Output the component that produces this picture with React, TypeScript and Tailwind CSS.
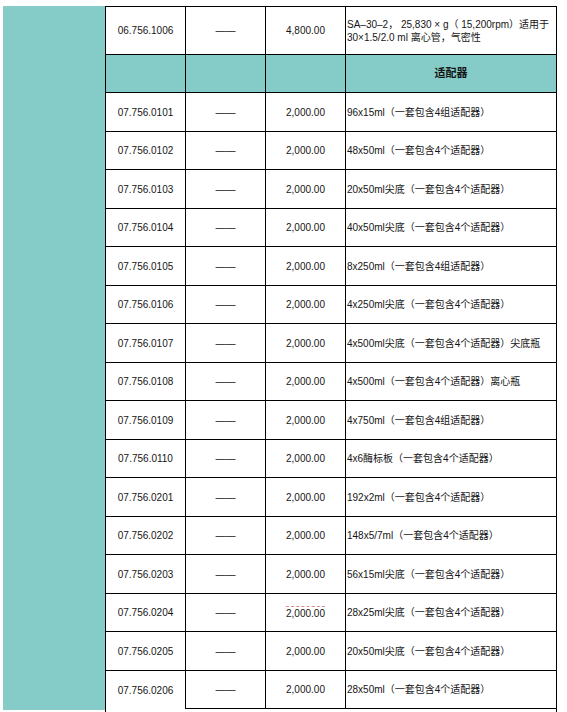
import React from 'react';

type Row = {
  code: string;
  price: string;
  desc: string;
  marked?: boolean;
};

const rows: Row[] = [
  { code: '07.756.0101', price: '2,000.00', desc: '96x15ml（一套包含4组适配器）' },
  { code: '07.756.0102', price: '2,000.00', desc: '48x50ml（一套包含4个适配器）' },
  { code: '07.756.0103', price: '2,000.00', desc: '20x50ml尖底（一套包含4个适配器）' },
  { code: '07.756.0104', price: '2,000.00', desc: '40x50ml尖底（一套包含4个适配器）' },
  { code: '07.756.0105', price: '2,000.00', desc: '8x250ml（一套包含4组适配器）' },
  { code: '07.756.0106', price: '2,000.00', desc: '4x250ml尖底（一套包含4个适配器）' },
  { code: '07.756.0107', price: '2,000.00', desc: '4x500ml尖底（一套包含4个适配器）尖底瓶' },
  { code: '07.756.0108', price: '2,000.00', desc: '4x500ml（一套包含4个适配器）离心瓶' },
  { code: '07.756.0109', price: '2,000.00', desc: '4x750ml（一套包含4组适配器）' },
  { code: '07.756.0110', price: '2,000.00', desc: '4x6酶标板（一套包含4个适配器）' },
  { code: '07.756.0201', price: '2,000.00', desc: '192x2ml（一套包含4个适配器）' },
  { code: '07.756.0202', price: '2,000.00', desc: '148x5/7ml（一套包含4个适配器）' },
  { code: '07.756.0203', price: '2,000.00', desc: '56x15ml尖底（一套包含4个适配器）' },
  { code: '07.756.0204', price: '2,000.00', desc: '28x25ml尖底（一套包含4个适配器）', marked: true },
  { code: '07.756.0205', price: '2,000.00', desc: '20x50ml尖底（一套包含4个适配器）' },
  { code: '07.756.0206', price: '2,000.00', desc: '28x50ml（一套包含4个适配器）' },
];

const font = { fontFamily: '"Liberation Sans", "Noto Sans CJK SC", sans-serif' };

const App = () => {
  return (
    <div className="w-[567px] h-[712px] bg-white flex pl-[3px] pt-[6px] text-[10px] text-[#151515]" style={font}>
      {/* teal side band */}
      <div className="w-[102px] h-[704px] bg-[#85cbc7]" />

      <div className="w-[452px] border-l border-t border-r border-black">
        {/* first row */}
        <div className="grid grid-cols-[80px_80px_80px_1fr] h-[48px] border-b border-black">
          <div className="flex items-center justify-center border-r border-black">06.756.1006</div>
          <div className="flex items-center justify-center border-r border-black">——</div>
          <div className="flex items-center justify-center border-r border-black">4,800.00</div>
          <div className="flex flex-col justify-center pl-[1px] leading-[13px]">
            <span>SA–30–2， 25,830 × g（ 15,200rpm）适用于</span>
            <span>30×1.5/2.0 ml 离心管，气密性</span>
          </div>
        </div>

        {/* section header */}
        <div className="grid grid-cols-[80px_80px_80px_1fr] h-[38px] bg-[#85cbc7] border-b border-black">
          <div className="border-r border-black" />
          <div className="border-r border-black" />
          <div className="border-r border-black" />
          <div className="flex items-center justify-center font-bold text-[11px]">适配器</div>
        </div>

        {rows.map((r, i) => {
          const last = i === rows.length - 1;
          return (
            <div
              key={r.code}
              className={`grid grid-cols-[80px_80px_80px_1fr] ${i % 2 === 0 ? 'h-[39px]' : 'h-[38px]'}`}
            >
              <div className={`flex items-center justify-center border-r border-black ${last ? '' : 'border-b'}`}>
                {r.code}
              </div>
              <div className={`flex items-center justify-center border-r border-black ${last ? 'border-b' : 'border-b'}`}>
                ——
              </div>
              <div className="flex items-center justify-center border-r border-b border-black">
                {r.marked ? (
                  <span className="border-t border-dashed border-[#d98a8a] leading-[11px] pt-[1px]">{r.price}</span>
                ) : (
                  r.price
                )}
              </div>
              <div className="flex items-center pl-[1px] border-b border-black">{r.desc}</div>
            </div>
          );
        })}
      </div>
    </div>
  );
};

export default App;
